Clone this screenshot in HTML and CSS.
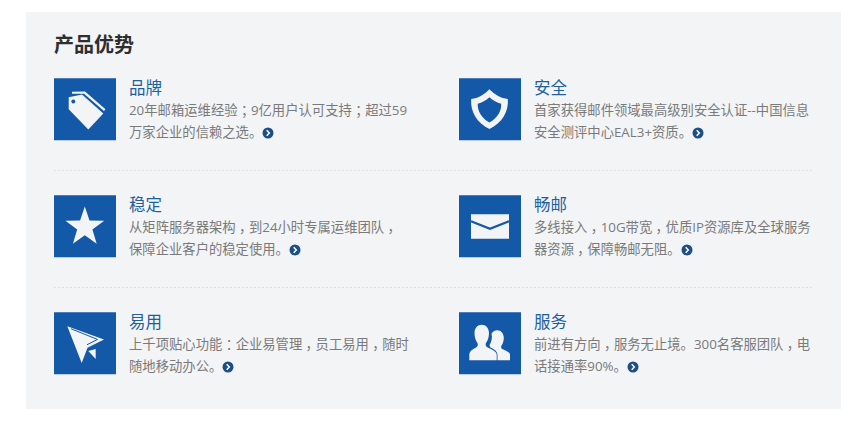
FILE: index.html
```html
<!DOCTYPE html>
<html lang="zh-CN">
<head>
<meta charset="utf-8">
<title>产品优势</title>
<link rel="stylesheet" href="styles.css">
</head>
<body>
<section class="panel">
  <h2 class="heading">产品优势</h2>
  <div class="row">
    <article class="item">
      <svg class="icon" viewBox="0 0 62 62"><rect width="62" height="62" fill="#1458a8"/><path fill="#f2f4f6" fill-rule="evenodd" d="M14.7 19 28 16.2 49.3 35.3 34.3 51.3 14.7 31ZM19.3 21.3a2 2 0 1 0 .01 0Z"/><path fill="#f2f4f6" d="M18 13.6 31 13.2 51.5 31 50 32.8 30 15.4 18 15.6Z"/></svg>
      <div class="text">
        <h3 class="name">品牌</h3>
        <p class="desc">20年邮箱运维经验<span class="punct">；</span>9亿用户认可支持<span class="punct">；</span>超过59<br>万家企业的信赖之选。<a class="more" href="#"><svg viewBox="0 0 12 12"><circle cx="6" cy="6" r="5.5" fill="#1d4f87"/><path d="M4.7 3.3 7.3 6 4.7 8.7" fill="none" stroke="#fff" stroke-width="1.5"/></svg></a></p>
      </div>
    </article>
    <article class="item">
      <svg class="icon" viewBox="0 0 62 62"><rect width="62" height="62" fill="#1458a8"/><path fill="#f2f4f6" fill-rule="evenodd" d="M30.4 11C26 16 19 20 12.2 20.8 11 33 18 45 30.4 50.8 43 45 50 33 48.8 20.8 42 20 35 16 30.4 11ZM30.4 19C27 22 23 24.500 18.700 25.600 18.500 33 22.500 40 30.400 44.300 38.500 40 42.500 33 42.200 25.600 38 24.500 34 22 30.400 19Z"/></svg>
      <div class="text">
        <h3 class="name">安全</h3>
        <p class="desc">首家获得邮件领域最高级别安全认证--中国信息<br>安全测评中心EAL3+资质。<a class="more" href="#"><svg viewBox="0 0 12 12"><circle cx="6" cy="6" r="5.5" fill="#1d4f87"/><path d="M4.7 3.3 7.3 6 4.7 8.7" fill="none" stroke="#fff" stroke-width="1.5"/></svg></a></p>
      </div>
    </article>
  </div>
  <div class="row">
    <article class="item">
      <svg class="icon" viewBox="0 0 62 62"><rect width="62" height="62" fill="#1458a8"/><path fill="#f2f4f6" d="M30.800 11.300 35.500 25.200 50.200 25.400 38.400 34.300 42.700 48.600 30.800 40 18.900 48.600 23.200 34.300 11.400 25.400 26.100 25.200Z"/></svg>
      <div class="text">
        <h3 class="name">稳定</h3>
        <p class="desc">从矩阵服务器架构<span class="punct">，</span>到24小时专属运维团队<span class="punct">，</span><br>保障企业客户的稳定使用。<a class="more" href="#"><svg viewBox="0 0 12 12"><circle cx="6" cy="6" r="5.5" fill="#1d4f87"/><path d="M4.7 3.3 7.3 6 4.7 8.7" fill="none" stroke="#fff" stroke-width="1.5"/></svg></a></p>
      </div>
    </article>
    <article class="item">
      <svg class="icon" viewBox="0 0 62 62"><rect width="62" height="62" fill="#1458a8"/><rect x="12" y="19" width="38" height="24.500" fill="#f2f4f6"/><path d="M12 26 31 33.500 50 26" fill="none" stroke="#1458a8" stroke-width="2.400"/></svg>
      <div class="text">
        <h3 class="name">畅邮</h3>
        <p class="desc">多线接入<span class="punct">，</span>10G带宽<span class="punct">，</span>优质IP资源库及全球服务<br>器资源<span class="punct">，</span>保障畅邮无阻。<a class="more" href="#"><svg viewBox="0 0 12 12"><circle cx="6" cy="6" r="5.5" fill="#1d4f87"/><path d="M4.7 3.3 7.3 6 4.7 8.7" fill="none" stroke="#fff" stroke-width="1.5"/></svg></a></p>
      </div>
    </article>
  </div>
  <div class="row">
    <article class="item">
      <svg class="icon" viewBox="0 0 62 62"><rect width="62" height="62" fill="#1458a8"/><path fill="#f2f4f6" d="M13.300 14 50 27.300 33.500 35.500 27.700 50.700Z"/><path fill="#f2f4f6" d="M34.300 38.700 41.700 36.700V46.700Z"/><path d="M17 16.500 43.500 27.200 33 32.500" fill="none" stroke="#1458a8" stroke-width="1"/></svg>
      <div class="text">
        <h3 class="name">易用</h3>
        <p class="desc">上千项贴心功能<span class="punct">：</span>企业易管理<span class="punct">，</span>员工易用<span class="punct">，</span>随时<br>随地移动办公。<a class="more" href="#"><svg viewBox="0 0 12 12"><circle cx="6" cy="6" r="5.5" fill="#1d4f87"/><path d="M4.7 3.3 7.3 6 4.7 8.7" fill="none" stroke="#fff" stroke-width="1.5"/></svg></a></p>
      </div>
    </article>
    <article class="item">
      <svg class="icon" viewBox="0 0 62 62"><rect width="62" height="62" fill="#1458a8"/><path fill="#f2f4f6" d="M38.500 48H51V42.500C51 39.500 45.500 38 42.800 36.500 42 35.500 42 34 42.500 33.200 44 31.500 44.800 28.500 44.800 25.500 44.800 21.500 42 18 38.300 18 35.700 18 33.500 19.500 32.500 21.500 33.500 25 32.500 30 30.500 32.800 30.800 33.700 31 34.800 31.500 35.200 34.500 36.800 38.500 38.500 38.500 43Z"/><path fill="#f2f4f6" d="M10.300 48H37.700V42.500C37.700 38.500 30.500 36.500 27.500 34.500 26.500 33.300 26.500 31.800 27 30.800 28.700 28.500 30 25 30 20.800 30 16 26.800 12.500 22.700 12.500 18.600 12.500 15.500 16 15.500 20.800 15.500 25 16.700 28.500 18.400 30.800 19 31.800 19 33.300 18 34.500 15.500 36.500 10.300 38 10.300 42.500Z"/></svg>
      <div class="text">
        <h3 class="name">服务</h3>
        <p class="desc">前进有方向<span class="punct">，</span>服务无止境。300名客服团队<span class="punct">，</span>电<br>话接通率90%。<a class="more" href="#"><svg viewBox="0 0 12 12"><circle cx="6" cy="6" r="5.5" fill="#1d4f87"/><path d="M4.7 3.3 7.3 6 4.7 8.7" fill="none" stroke="#fff" stroke-width="1.5"/></svg></a></p>
      </div>
    </article>
  </div>
</section>
</body>
</html>
```

FILE: styles.css
```css
* {
  box-sizing: border-box;
}

html,
body {
  margin: 0;
  background: #fff;
}

body {
  padding: 12px 16px 22px 26px;
  font-family: "Open Sans", "Noto Sans CJK SC", sans-serif;
}

.panel {
  height: 397px;
  padding: 21px 28px 0;
  background: #f2f4f6;
}

.heading {
  margin: 0 0 21px;
  height: 24px;
  font-size: 20px;
  line-height: 24px;
  font-weight: 700;
  color: #2e2e2e;
}

.row {
  display: grid;
  grid-template-columns: 405px 1fr;
  height: 117px;
}

.row:not(:last-child) {
  background-image: linear-gradient(to right, #dddfe1 50%, transparent 50%);
  background-size: 4px 1px;
  background-repeat: repeat-x;
  background-position: 0 92px;
}

.item {
  display: flex;
  gap: 13px;
  align-items: flex-start;
}

.icon {
  flex: none;
  display: block;
  width: 62px;
  height: 62.500px;
}

.text {
  white-space: nowrap;
}

.name {
  margin: 0;
  height: 20.500px;
  font-size: 16.500px;
  line-height: 20px;
  font-weight: 400;
  color: #1f5f9e;
}

.desc {
  margin: 0;
  font-size: 13.330px;
  line-height: 22.500px;
  color: #7a7a7a;
}

.punct {
  padding: 0 0.25em;
  font-feature-settings: "halt";
}

.more {
  display: inline-block;
  width: 12px;
  height: 12px;
  vertical-align: -2px;
}

.more svg {
  display: block;
  width: 100%;
  height: 100%;
}
```
